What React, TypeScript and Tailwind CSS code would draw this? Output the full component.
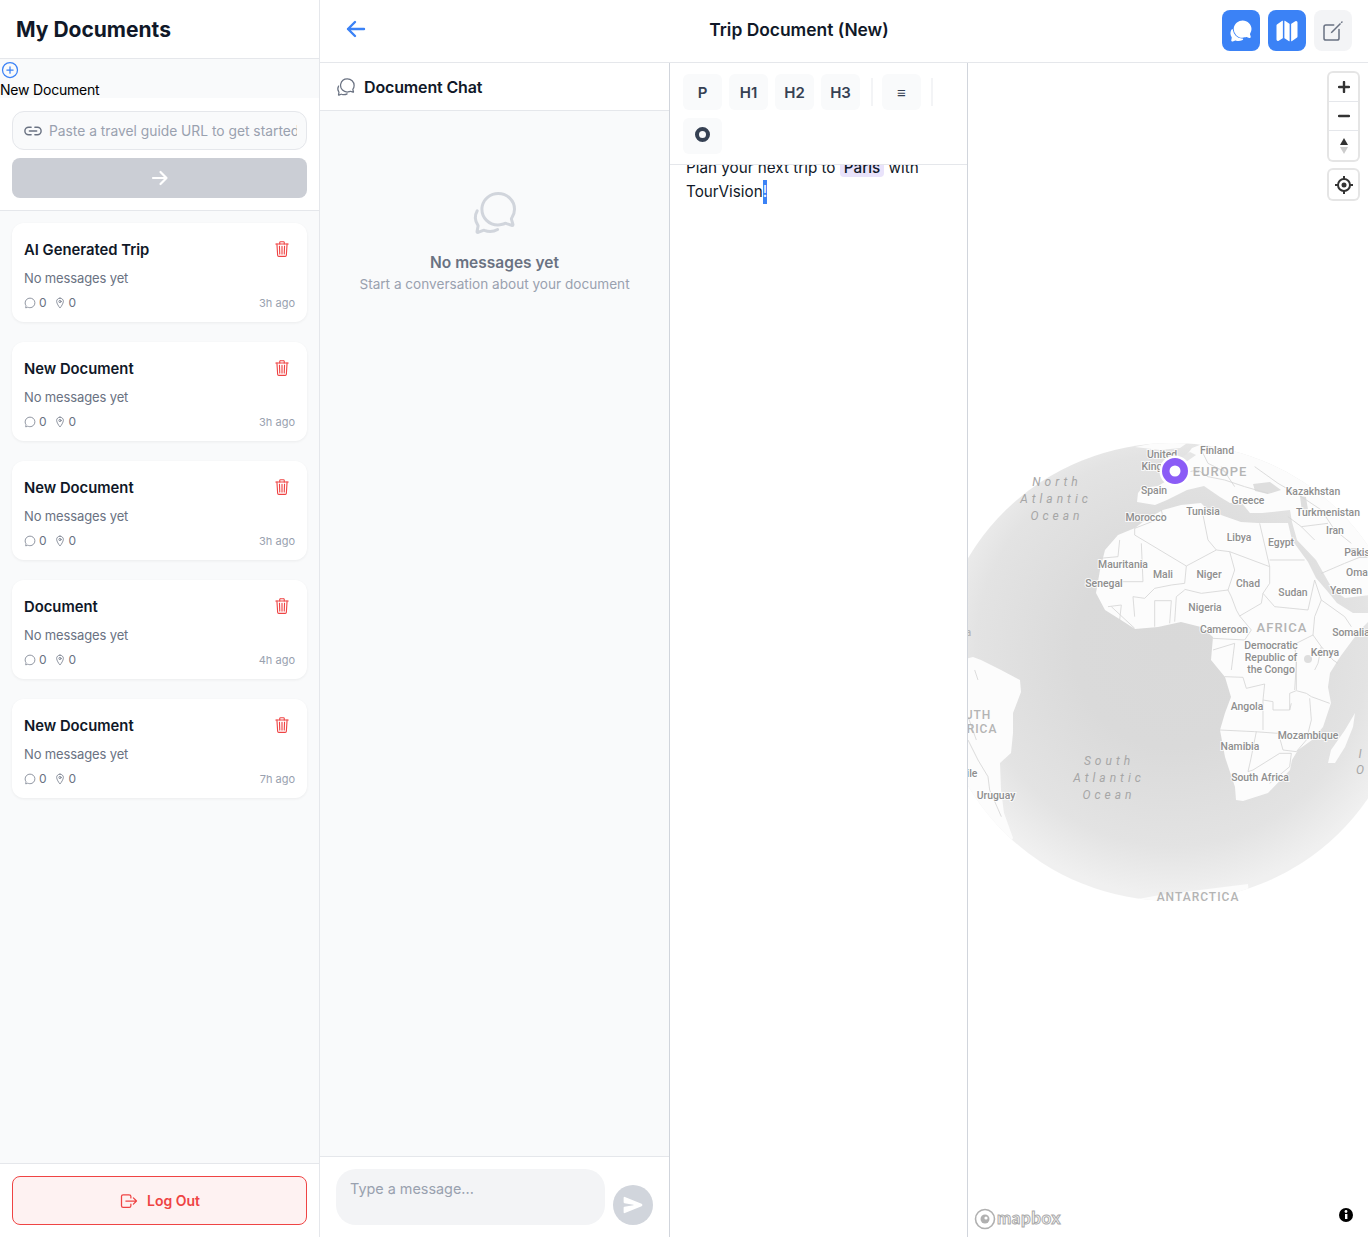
import {
  IoAddCircleOutline,
  IoChatbubbleOutline,
  IoChatbubbles,
  IoChatbubblesOutline,
  IoCreateOutline,
  IoLinkOutline,
  IoLocationOutline,
  IoLogOutOutline,
  IoMap,
  IoSend,
  IoTrashOutline
} from "react-icons/io5";

const documents = [
  { title: "AI Generated Trip", age: "3h ago" },
  { title: "New Document", age: "3h ago" },
  { title: "New Document", age: "3h ago" },
  { title: "Document", age: "4h ago" },
  { title: "New Document", age: "7h ago" }
];

// The ionicons arrows are too thin at this size, so these two are drawn.
function ArrowForward() {
  return (
    <svg width="18" height="16" viewBox="0 0 18 16" fill="none" stroke="#ffffff" strokeWidth="2.2" strokeLinecap="round" strokeLinejoin="round">
      <path d="M2 8h13.5M9.5 2l6 6-6 6" />
    </svg>
  );
}

function ArrowBack() {
  return (
    <svg width="20" height="18" viewBox="0 0 20 18" fill="none" stroke="#3b82f6" strokeWidth="2.4" strokeLinecap="round" strokeLinejoin="round">
      <path d="M18 9H2M9 2 2 9l7 7" />
    </svg>
  );
}

function DocumentCard({ title, age }: { title: string; age: string }) {
  return (
    <div className="rounded-xl bg-white px-3 pb-[11px] pt-3 shadow-[0_1px_3px_rgba(0,0,0,0.06)]">
      <div className="flex h-7 items-center justify-between">
        <span className="pt-[2px] text-[14.8px] font-semibold text-gray-900">{title}</span>
        <IoTrashOutline size={18} className="mr-[4px] text-[#ef4444]" />
      </div>
      <p className="mt-[6px] text-[13px] leading-[18px] tracking-[-0.13px] text-gray-500">No messages yet</p>
      <div className="mt-[8px] flex h-4 items-center text-xs text-gray-500">
        <IoChatbubbleOutline size={12} />
        <span className="ml-[3px]">0</span>
        <IoLocationOutline size={12} className="ml-[7px]" />
        <span className="ml-[3px]">0</span>
        <span className="ml-auto text-[11px] text-gray-400">{age}</span>
      </div>
    </div>
  );
}

function Sidebar() {
  return (
    <aside className="flex w-[320px] shrink-0 flex-col border-r border-gray-200 bg-gray-50">
      <div className="flex h-[59px] items-center border-b border-gray-200 bg-white px-4">
        <h1 className="mt-[2px] text-[21px] font-bold text-gray-900">My Documents</h1>
      </div>
      <div className="flex h-[39px] flex-col items-start pt-[1px] text-sm tracking-[-0.2px] text-black">
        <IoAddCircleOutline size={20} className="shrink-0 text-[#3b82f6]" />
        <span className="shrink-0 leading-5">New Document</span>
      </div>
      <div className="flex h-[113px] flex-col gap-2 border-b border-gray-200 bg-white px-3 pt-[13px]">
        <div className="flex h-[39px] items-center gap-[6px] rounded-xl border border-gray-200 bg-gray-50 pl-[10px] pr-[9px]">
          <IoLinkOutline size={20} className="shrink-0 text-gray-500" />
          <input
            readOnly
            placeholder="Paste a travel guide URL to get started"
            className="min-w-0 flex-1 bg-transparent pt-px text-[13.8px] outline-none placeholder:text-gray-400"
          />
        </div>
        <div className="flex h-10 items-center justify-center rounded-lg bg-[#cbced5]">
          <ArrowForward />
        </div>
      </div>
      <div className="flex flex-1 flex-col gap-5 p-3">
        {documents.map((doc, i) => (
          <DocumentCard key={i} title={doc.title} age={doc.age} />
        ))}
      </div>
      <div className="border-t border-gray-200 bg-white p-3">
        <button
          type="button"
          className="flex h-[49px] w-full items-center justify-center gap-2 rounded-lg border border-[#ef4444] bg-red-50 text-sm font-semibold text-[#ef4444]"
        >
          <IoLogOutOutline size={20} />
          Log Out
        </button>
      </div>
    </aside>
  );
}

function ChatPanel() {
  return (
    <section className="flex w-[350px] shrink-0 flex-col border-r border-gray-300 bg-gray-50">
      <div className="flex h-[48px] items-center gap-2 border-b border-gray-200 bg-white px-4">
        <IoChatbubblesOutline size={20} className="text-gray-500" />
        <span className="text-base font-semibold tracking-[-0.15px] text-gray-900">Document Chat</span>
      </div>
      <div className="flex flex-1 flex-col items-center pt-[78px]">
        <IoChatbubblesOutline size={48} className="text-gray-300" />
        <p className="mt-[14px] text-[15.5px] font-semibold text-gray-500">No messages yet</p>
        <p className="text-[13.6px] leading-5 text-gray-400">Start a conversation about your document</p>
      </div>
      <div className="flex items-end gap-2 border-t border-gray-200 bg-white px-4 py-3">
        <textarea
          readOnly
          placeholder="Type a message..."
          className="h-14 min-w-0 flex-1 resize-none rounded-[20px] bg-gray-100 px-[14px] py-[9px] text-[14.4px] outline-none placeholder:text-gray-400"
        />
        <div className="flex h-10 w-10 items-center justify-center rounded-full bg-gray-300">
          <IoSend size={20} className="text-white" />
        </div>
      </div>
    </section>
  );
}

function ToolButton({ children }: { children: React.ReactNode }) {
  return (
    <div className="flex h-9 w-[39px] items-center justify-center rounded-md bg-gray-50 pt-[2px] text-[15px] font-semibold text-gray-700">
      {children}
    </div>
  );
}

function EditorPanel() {
  return (
    <section className="flex w-[298px] shrink-0 flex-col border-r border-gray-300 bg-white">
      <div className="relative z-10 flex flex-wrap items-center gap-x-[7px] gap-y-2 border-b border-gray-200 bg-white pb-[10px] pl-[13px] pr-2 pt-[11px]">
        <ToolButton>P</ToolButton>
        <ToolButton>H1</ToolButton>
        <ToolButton>H2</ToolButton>
        <ToolButton>H3</ToolButton>
        <div className="ml-[4px] mr-[2px] h-7 w-[2px] bg-gray-100" />
        <ToolButton>≡</ToolButton>
        <div className="ml-[3px] h-7 w-[2px] bg-gray-100" />
        <ToolButton>
          <span className="-mt-[6px] h-[15px] w-[15px] rounded-full border-[4px] border-gray-700" />
        </ToolButton>
      </div>
      <div className="flex-1 overflow-hidden">
        <p className="-mt-[9px] px-4 text-[15.25px] leading-6 text-gray-900">
          Plan your next trip to <span className="rounded bg-[#e9e3fb] px-1 font-medium">Paris</span> with TourVision
          <span className="inline-block h-6 bg-[#3b82f6] align-top leading-6 text-white">!</span>
        </p>
      </div>
    </section>
  );
}

const labels: [string, number, number][] = [
  ["United", 1162, 458],
  ["King", 1152, 470],
  ["Finland", 1217, 454],
  ["Spain", 1154, 494],
  ["Greece", 1248, 504],
  ["Kazakhstan", 1313, 495],
  ["Tunisia", 1203, 515],
  ["Turkmenistan", 1328, 516],
  ["Morocco", 1146, 521],
  ["Iran", 1335, 534],
  ["Libya", 1239, 541],
  ["Egypt", 1281, 546],
  ["Pakis", 1357, 556],
  ["Mauritania", 1123, 568],
  ["Oma", 1357, 576],
  ["Mali", 1163, 578],
  ["Niger", 1209, 578],
  ["Senegal", 1104, 587],
  ["Chad", 1248, 587],
  ["Yemen", 1346, 594],
  ["Sudan", 1293, 596],
  ["Nigeria", 1205, 611],
  ["Cameroon", 1224, 633],
  ["Somalia", 1351, 636],
  ["Democratic", 1271, 649],
  ["Republic of", 1271, 661],
  ["the Congo", 1271, 673],
  ["Kenya", 1325, 656],
  ["Angola", 1247, 710],
  ["Mozambique", 1308, 739],
  ["Namibia", 1240, 750],
  ["South Africa", 1260, 781],
  ["Uruguay", 996, 799],
  ["ile", 972, 777]
];

const regionLabels: [string, number, number, number][] = [
  ["EUROPE", 1220, 476, 13],
  ["AFRICA", 1282, 632, 13],
  ["ANTARCTICA", 1198, 901, 12],
  ["UTH", 978, 719, 12],
  ["RICA", 982, 733, 12],
  ["a", 969, 636, 10]
];

const oceanLabels: [string, number, number][] = [
  ["North", 1057, 486],
  ["Atlantic", 1056, 503],
  ["Ocean", 1057, 520],
  ["South", 1109, 765],
  ["Atlantic", 1109, 782],
  ["Ocean", 1109, 799],
  ["I", 1362, 758],
  ["O", 1362, 774]
];

function MapDrawing() {
  return (
    <svg viewBox="968 63 400 1174" className="absolute inset-0 h-full w-full font-['Roboto',sans-serif]">
      <defs>
        <radialGradient id="sea" cx="1172" cy="650" r="245" gradientUnits="userSpaceOnUse">
          <stop offset="0" stopColor="#d9d9d9" />
          <stop offset="0.4" stopColor="#dadada" />
          <stop offset="0.8" stopColor="#e3e3e3" />
          <stop offset="1" stopColor="#f0f0f0" />
        </radialGradient>
        <clipPath id="globe">
          <ellipse cx="1172" cy="672" rx="235" ry="229" />
        </clipPath>
      </defs>
      <g clipPath="url(#globe)">
        <rect x="930" y="430" width="480" height="490" fill="url(#sea)" />
        {/* land */}
        <g fill="#fcfcfc">
          <path d="M1163 510 1181 505 1201 503 1208 510 1221 515 1241 522 1258 523 1288 523 1292 540 1308 562 1316 578 1328 592 1337 603 1353 613 1368 613 1368 622 1360 630 1340 657 1330 673 1328 687 1331 703 1323 727 1312 740 1298 750 1292 760 1290 770 1268 793 1243 801 1236 800 1235 787 1225 757 1220 730 1225 713 1231 697 1225 677 1211 660 1213 637 1201 627 1181 622 1158 627 1135 629 1121 620 1105 610 1096 593 1100 570 1105 550 1118 535 1135 528 1148 518Z" />
          <path d="M1137 502 1138 493 1142 488 1158 486 1168 480 1176 466 1186 456 1192 448 1205 443 1262 446 1320 474 1380 530 1380 594 1345 598 1333 590 1316 560 1297 540 1292 522 1290 510 1262 513 1250 513 1241 502 1230 503 1220 497 1204 486 1187 490 1167 500 1155 505Z" />
          <path d="M1135 447 1165 441 1190 441 1180 448 1160 450Z" />
          <path d="M1355 713 1345 730 1331 750 1328 763 1335 763 1345 747 1353 727Z" />
          <path d="M960 660 973 657 981 660 1001 670 1020 680 1021 692 1013 713 1013 733 1011 753 1000 763 1001 790 1004 813 1013 838 1000 860 960 860Z" />
          <path d="M1120 906 1138 899 1160 895 1248 884 1250 910 1120 910Z" />
        </g>
        {/* inland seas */}
        <g fill="#dedede">
          <path d="M1253 484 1270 482 1281 490 1268 494 1255 491Z" />
          <path d="M1300 496 1306 497 1308 510 1302 512Z" />
          <path d="M1347 548 1358 548 1368 558 1360 558Z" />
          <circle cx="1308" cy="659" r="4" />
        </g>
        <g fill="#e6e6e6">
          <path d="M1178 460 1190 452 1196 455 1186 462Z" />
          <path d="M1200 442 1212 447 1204 452Z" />
        </g>
        {/* borders, traced at 3x around the north and south of Africa */}
        <g transform="translate(968 430) scale(0.33333)" fill="none" stroke="#d6d6d6" strokeWidth="2.6">
          <path d="M500 315 655 408 745 360 785 365 905 410 875 280" />
          <path d="M580 240 585 262 500 295 500 315" />
          <path d="M705 255 720 330 745 360" />
          <path d="M905 390 1010 390" />
          <path d="M785 365 800 420 780 480 790 500 805 540 815 558 880 520 885 490 905 460 905 410" />
          <path d="M655 408 650 460 610 465 560 475 530 505 495 500" />
          <path d="M520 340 525 455 465 455 400 455" />
          <path d="M455 330 450 380 395 385" />
          <path d="M650 478 700 490 780 480" />
          <path d="M650 480 625 500 620 575" />
          <path d="M885 490 920 530 1020 540 1040 450" />
          <path d="M560 512 610 512 605 580M560 512 560 590M495 500 500 560M430 530 500 595M420 530 460 525 455 570" />
          <path d="M1040 450 1060 510 1130 560 1150 590" />
          <path d="M815 558 850 600 830 630 735 625M735 660 800 640 790 720" />
          <path d="M1035 615 1060 650 1050 700 1040 720M1060 650 1095 690 1110 700" />
          <path d="M980 640 985 700 980 780" />
          <path d="M1060 510 1040 560 1035 615 985 640" />
          {/* Europe and the Near East */}
          <path d="M640 130 690 120 720 140 770 150 830 170 900 190M700 60 720 100 780 130M760 110 800 170M860 110 930 160 1000 200M1000 200 1060 240 1100 300 1150 340M960 260 1000 290 1040 330M1000 290 1080 280M1060 430 1130 400 1180 380" />
        </g>
        <g transform="translate(968 660) scale(0.33333)" fill="none" stroke="#d6d6d6" strokeWidth="2.6">
          <path d="M770 50 825 52 835 85 890 72 885 120 915 125 915 150 965 150 970 130" />
          <path d="M885 120 885 210M755 210 860 215 930 220" />
          <path d="M865 215 848 300 840 335 855 330 935 280 970 280" />
          <path d="M930 215 945 270 985 275 1015 240 1030 180 1025 115" />
          <path d="M965 150 965 100 985 92 1015 100 1030 110 1085 130" />
          <path d="M970 280 965 320 905 370" />
          <path d="M985 0 985 90" />
          {/* Andes side of South America */}
          <path d="M0 240 30 300 60 350 65 390 100 470M20 30 30 60M0 170 25 240" />
        </g>
      </g>

      <g className="[paint-order:stroke]" stroke="#ffffff" strokeWidth="2" strokeOpacity="0.8" fill="#8e8e8e" fontSize="10.4" fontWeight="500" textAnchor="middle">
        {labels.map(([text, x, y]) => (
          <text key={text} x={x} y={y}>
            {text}
          </text>
        ))}
      </g>
      <g fill="#b4b4b4" fontWeight="500" textAnchor="middle" letterSpacing="1">
        {regionLabels.map(([text, x, y, size]) => (
          <text key={text} x={x} y={y} fontSize={size}>
            {text}
          </text>
        ))}
      </g>
      <g fill="#a6a6a6" fontSize="12" fontStyle="italic" textAnchor="middle" letterSpacing="4">
        {oceanLabels.map(([text, x, y]) => (
          <text key={text + y} x={x} y={y}>
            {text}
          </text>
        ))}
      </g>

      {/* pin */}
      <circle cx="1175" cy="471" r="15.5" fill="#ffffff" />
      <circle cx="1175" cy="471" r="13" fill="#8b5cf6" />
      <circle cx="1175" cy="471" r="5.5" fill="#ffffff" />

      {/* attribution */}
      <circle cx="985" cy="1219" r="9.5" fill="#ffffff" stroke="#b0b0b0" strokeWidth="1.6" />
      <circle cx="985" cy="1219" r="4.5" fill="#b0b0b0" />
      <circle cx="986" cy="1218" r="1.6" fill="#ffffff" />
      <text x="997" y="1224" fontFamily="Lato, sans-serif" fontSize="17" fontWeight="700" letterSpacing="0.6" fill="#ffffff" stroke="#aaaaaa" strokeWidth="1">
        mapbox
      </text>
      <circle cx="1346" cy="1215" r="7" fill="#000000" />
      <rect x="1345" y="1214" width="2.4" height="5" fill="#ffffff" />
      <circle cx="1346" cy="1211.5" r="1.4" fill="#ffffff" />
    </svg>
  );
}

function MapPanel() {
  return (
    <section className="relative min-w-0 flex-1 overflow-hidden bg-white">
      <MapDrawing />
      <div className="absolute right-[10px] top-[10px] flex w-[29px] flex-col rounded bg-white shadow-[0_0_0_2px_rgba(0,0,0,0.1)]">
        <div className="flex h-[29px] items-center justify-center border-b border-gray-200">
          <svg width="12" height="12" viewBox="0 0 12 12">
            <path d="M6 1v10M1 6h10" stroke="#333" strokeWidth="2.4" strokeLinecap="round" />
          </svg>
        </div>
        <div className="flex h-[29px] items-center justify-center border-b border-gray-200">
          <svg width="12" height="12" viewBox="0 0 12 12">
            <path d="M1 6h10" stroke="#333" strokeWidth="2.4" strokeLinecap="round" />
          </svg>
        </div>
        <div className="flex h-[29px] items-center justify-center">
          <svg width="10" height="16" viewBox="0 0 10 16">
            <path d="M5 0 9 7H1Z" fill="#333" />
            <path d="M5 16 1 9H9Z" fill="#ccc" />
          </svg>
        </div>
      </div>
      <div className="absolute right-[10px] top-[107px] flex h-[29px] w-[29px] items-center justify-center rounded bg-white shadow-[0_0_0_2px_rgba(0,0,0,0.1)]">
        <svg width="20" height="20" viewBox="0 0 20 20" fill="none" stroke="#333">
          <circle cx="10" cy="10" r="6" strokeWidth="2" />
          <circle cx="10" cy="10" r="2.5" fill="#333" stroke="none" />
          <path d="M10 1v3M10 16v3M1 10h3M16 10h3" strokeWidth="2" />
        </svg>
      </div>
    </section>
  );
}

export default function App() {
  return (
    <div className="flex h-[1237px] overflow-hidden bg-white font-['Inter',sans-serif]">
      <Sidebar />
      <main className="flex min-w-0 flex-1 flex-col">
        <header className="flex h-[63px] items-center border-b border-gray-200 bg-white px-4">
          <button type="button" className="-mt-[4px] flex h-10 w-10 items-center justify-center">
            <ArrowBack />
          </button>
          <h2 className="-mt-px flex-1 text-center text-[17.4px] font-semibold text-gray-900">Trip Document (New)</h2>
          <div className="-mt-px flex gap-2">
            <div className="flex h-[41px] w-[38px] items-center justify-center rounded-lg bg-[#3b82f6]">
              <IoChatbubbles size={24} className="text-white" />
            </div>
            <div className="flex h-[41px] w-[38px] items-center justify-center rounded-lg bg-[#3b82f6]">
              <IoMap size={24} className="text-white" />
            </div>
            <div className="flex h-[41px] w-[38px] items-center justify-center rounded-lg bg-gray-100">
              <IoCreateOutline size={24} className="text-gray-500" />
            </div>
          </div>
        </header>
        <div className="flex min-h-0 flex-1">
          <ChatPanel />
          <EditorPanel />
          <MapPanel />
        </div>
      </main>
    </div>
  );
}
